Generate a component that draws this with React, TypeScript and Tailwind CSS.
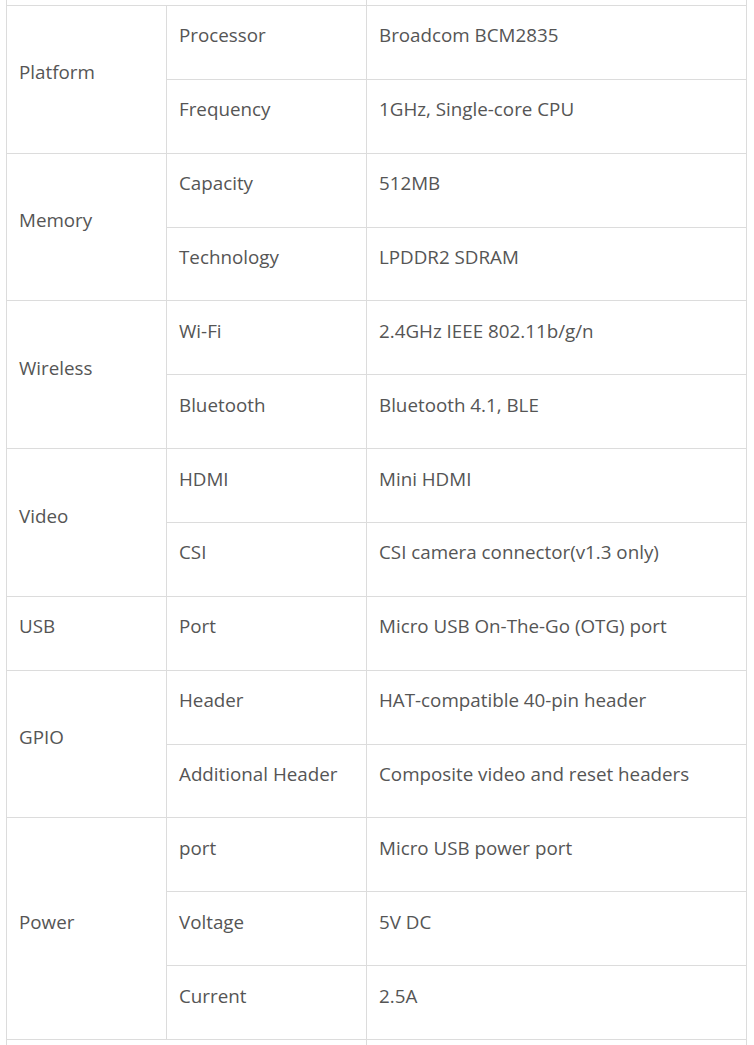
import React from 'react';

type Group = { name: string; rows: [string, string][] };

const groups: Group[] = [
  { name: 'Platform', rows: [['Processor', 'Broadcom BCM2835'], ['Frequency', '1GHz, Single-core CPU']] },
  { name: 'Memory', rows: [['Capacity', '512MB'], ['Technology', 'LPDDR2 SDRAM']] },
  { name: 'Wireless', rows: [['Wi-Fi', '2.4GHz IEEE 802.11b/g/n'], ['Bluetooth', 'Bluetooth 4.1, BLE']] },
  { name: 'Video', rows: [['HDMI', 'Mini HDMI'], ['CSI', 'CSI camera connector(v1.3 only)']] },
  { name: 'USB', rows: [['Port', 'Micro USB On-The-Go (OTG) port']] },
  { name: 'GPIO', rows: [['Header', 'HAT-compatible 40-pin header'], ['Additional Header', 'Composite video and reset headers']] },
  { name: 'Power', rows: [['port', 'Micro USB power port'], ['Voltage', '5V DC'], ['Current', '2.5A']] },
];

const cell = 'border border-[#dcdcdc] px-3 align-middle';

const Text: React.FC<{ children: React.ReactNode }> = ({ children }) => (
  <div className="leading-[30px] pb-[14px] whitespace-nowrap">{children}</div>
);

export default function App() {
  return (
    <div className="w-[754px] h-[1045px] overflow-hidden bg-white pl-[6px]">
      <table
        className="border-collapse w-[741px] mt-[-69px] text-[18.8px] text-[#555555] table-fixed"
        style={{ fontFamily: '"Open Sans", sans-serif' }}
      >
        <colgroup>
          <col className="w-[160px]" />
          <col className="w-[200px]" />
          <col />
        </colgroup>
        <tbody>
          <tr className="h-[74px]">
            <td className={cell} colSpan={2}></td>
            <td className={cell}></td>
          </tr>
          {groups.map((g) =>
            g.rows.map(([k, v], i) => (
              <tr key={g.name + k} className="h-[73.86px]">
                {i === 0 && (
                  <td className={cell} rowSpan={g.rows.length}>
                    <Text>{g.name}</Text>
                  </td>
                )}
                <td className={cell}>
                  <Text>{k}</Text>
                </td>
                <td className={cell}>
                  <Text>{v}</Text>
                </td>
              </tr>
            ))
          )}
          <tr className="h-[74px]">
            <td className={cell} colSpan={2}></td>
            <td className={cell}></td>
          </tr>
        </tbody>
      </table>
    </div>
  );
}
